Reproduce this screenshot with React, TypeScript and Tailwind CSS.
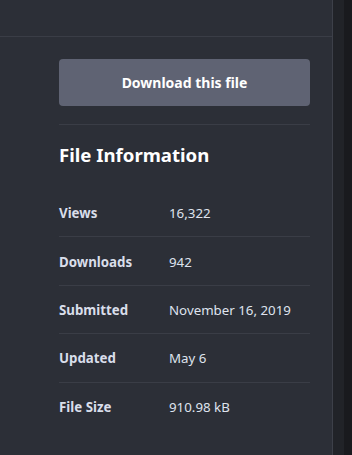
import React from "react";

const rows: [string, string][] = [
  ["Views", "16,322"],
  ["Downloads", "942"],
  ["Submitted", "November 16, 2019"],
  ["Updated", "May 6"],
  ["File Size", "910.98 kB"],
];

export default function App() {
  return (
    <div
      className="flex w-[352px] h-[455px] bg-[#2c2f37] overflow-hidden"
      style={{ fontFamily: '"Noto Sans", "Open Sans", sans-serif' }}
    >
      <div className="w-[333px] h-full border-r border-[#3d4049] flex flex-col">
        <div className="h-[37px] border-b border-[#3a3d46] shrink-0" />
        <div className="pl-[59px] pr-[22px] pt-[22px] flex flex-col">
          <button className="h-[47px] w-full rounded-[4px] bg-[#5f6373] text-white text-[14px] font-bold">
            Download this file
          </button>
          <div className="mt-[18px] border-t border-[#3a3d46]" />
          <h2 className="mt-[18px] h-[24px] leading-[24px] text-[18.6px] font-bold text-white">
            File Information
          </h2>
          <div className="mt-[22px] flex flex-col">
            {rows.map(([k, v], i) => (
              <div
                key={k}
                className={`flex items-center h-[48.4px] pt-[3px] text-[13.3px] ${
                  i < rows.length - 1 ? "border-b border-[#3a3d46]" : ""
                }`}
              >
                <span className="w-[110px] font-bold text-[#d9deea]">{k}</span>
                <span className="text-[#dfe3ee]">{v}</span>
              </div>
            ))}
          </div>
        </div>
      </div>
      <div className="w-[11px] h-full bg-[#212328]" />
      <div className="flex-1 h-full bg-[#191a1e]" />
    </div>
  );
}
